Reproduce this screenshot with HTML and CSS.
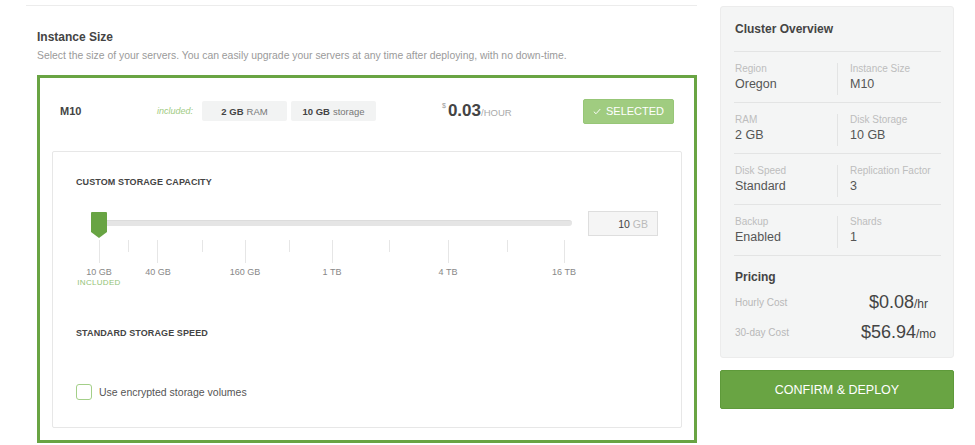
FILE: index.html
```html
<!DOCTYPE html>
<html>
<head>
<meta charset="utf-8">
<link rel="stylesheet" href="styles.css">
</head>
<body>
<div class="page">
  <div class="main">
    <div class="topline"></div>
    <div class="section">
      <h2 class="sec-title">Instance Size</h2>
      <p class="sec-sub">Select the size of your servers. You can easily upgrade your servers at any time after deploying, with no down-time.</p>
      <div class="tier">
        <div class="tier-head">
          <div class="tier-name">M10</div>
          <div class="included">included:</div>
          <div class="chip"><b>2 GB</b> RAM</div>
          <div class="chip"><b>10 GB</b> storage</div>
          <div class="price"><span class="cur">$</span><span class="amt">0.03</span><span class="per">/HOUR</span></div>
          <div class="selected"><svg class="check" viewBox="0 0 10 8" width="8" height="7"><path d="M1 4.2 L3.8 6.8 L9 1" fill="none" stroke="#fff" stroke-width="1.2"/></svg>SELECTED</div>
        </div>
        <div class="panel">
          <div class="label-caps">Custom Storage Capacity</div>
          <div class="slider-row">
            <div class="slider">
              <div class="track"></div>
              <svg class="thumb" viewBox="0 0 16 26" width="16" height="26"><path d="M1 0 H15 Q16 0 16 1 V20 L8 26 L0 20 V1 Q0 0 1 0 Z" fill="#68a443"/></svg>
              <div class="scale">
                <span class="tick tall" style="left:8px"></span>
                <span class="tick" style="left:37px"></span>
                <span class="tick tall" style="left:66px"></span>
                <span class="tick" style="left:111px"></span>
                <span class="tick tall" style="left:154px"></span>
                <span class="tick" style="left:198px"></span>
                <span class="tick tall" style="left:241px"></span>
                <span class="tick" style="left:298px"></span>
                <span class="tick tall" style="left:357px"></span>
                <span class="tick" style="left:416px"></span>
                <span class="tick tall" style="left:473px"></span>
                <span class="tlabel" style="left:8px">10 GB<em>INCLUDED</em></span>
                <span class="tlabel" style="left:67px">40 GB</span>
                <span class="tlabel" style="left:154px">160 GB</span>
                <span class="tlabel" style="left:241px">1 TB</span>
                <span class="tlabel" style="left:357px">4 TB</span>
                <span class="tlabel" style="left:473px">16 TB</span>
              </div>
            </div>
            <div class="gb-input"><span class="num">10</span> GB</div>
          </div>
          <div class="label-caps speed">Standard Storage Speed</div>
          <label class="check-row"><span class="box"></span>Use encrypted storage volumes</label>
        </div>
      </div>
    </div>
  </div>
  <div class="side">
    <div class="overview">
      <h3 class="ov-title">Cluster Overview</h3>
      <div class="ov-grid">
        <div class="ov-row">
          <div class="ov-cell"><div class="ov-label">Region</div><div class="ov-val">Oregon</div></div>
          <div class="ov-cell"><div class="ov-label">Instance Size</div><div class="ov-val">M10</div></div>
        </div>
        <div class="ov-row">
          <div class="ov-cell"><div class="ov-label">RAM</div><div class="ov-val">2 GB</div></div>
          <div class="ov-cell"><div class="ov-label">Disk Storage</div><div class="ov-val">10 GB</div></div>
        </div>
        <div class="ov-row">
          <div class="ov-cell"><div class="ov-label">Disk Speed</div><div class="ov-val">Standard</div></div>
          <div class="ov-cell"><div class="ov-label">Replication Factor</div><div class="ov-val">3</div></div>
        </div>
        <div class="ov-row">
          <div class="ov-cell"><div class="ov-label">Backup</div><div class="ov-val">Enabled</div></div>
          <div class="ov-cell"><div class="ov-label">Shards</div><div class="ov-val">1</div></div>
        </div>
      </div>
      <h3 class="pr-title">Pricing</h3>
      <div class="pr-list">
        <div class="pr-row"><div class="pr-label">Hourly Cost</div><div class="pr-val">$0.08<span>/hr</span></div></div>
        <div class="pr-row"><div class="pr-label">30-day Cost</div><div class="pr-val">$56.94<span>/mo</span></div></div>
      </div>
    </div>
    <button class="deploy">CONFIRM &amp; DEPLOY</button>
  </div>
</div>
</body>
</html>
```

FILE: styles.css
```css
* { box-sizing: border-box; }
html, body { margin: 0; padding: 0; background: #fff; }
body { font-family: "Liberation Sans", Arial, sans-serif; color: #444; }
.page { display: flex; align-items: flex-start; }
.main { margin-left: 26px; width: 671px; }
.topline { height: 1px; background: #ececec; margin-top: 5px; }
.section { padding-left: 11px; }
.sec-title { margin: 24px 0 0; font-size: 12px; line-height: 14px; font-weight: bold; color: #444; }
.sec-sub { margin: 5px 0 0; font-size: 10.4px; line-height: 14px; color: #9a9a9a; }
.tier { margin-top: 12px; border: 3px solid #69a443; padding: 0 12px 12px; }
.tier-head { display: flex; align-items: center; height: 66px; margin-bottom: 7px; padding-left: 8px; padding-right: 8px; }
.tier-name { width: 97px; font-size: 11px; font-weight: bold; color: #444; }
.included { font-size: 9px; font-style: italic; color: #9fcb83; width: 45px; }
.chip { width: 85px; height: 20px; margin-right: 4px; background: #f2f3f3; border-radius: 2px; display: flex; align-items: center; justify-content: center; font-size: 9.5px; color: #777; }
.chip b { color: #444; margin-right: 3px; }
.price { margin-left: 62px; display: flex; align-items: baseline; color: #444; }
.price .cur { font-size: 7px; color: #999; align-self: flex-start; margin-top: 1px; margin-right: 2px; }
.price .amt { font-size: 17px; font-weight: bold; }
.price .per { font-size: 9.5px; color: #aaa; }
.selected { margin-left: auto; width: 91px; height: 25px; background: #a0cc80; border: 1px solid #97c677; border-radius: 2px; color: #fff; font-size: 11px; display: flex; align-items: center; justify-content: center; }
.check { margin-right: 5px; }
.panel { border: 1px solid #e7e7e7; border-radius: 2px; padding: 25px 23px 0; height: 277px; }
.label-caps { font-size: 9px; line-height: 11px; font-weight: bold; text-transform: uppercase; color: #444; letter-spacing: 0.1px; }
.slider-row { display: flex; margin-top: 24px; height: 93px; }
.slider { position: relative; margin-left: 15px; width: 481px; height: 93px; }
.track { position: absolute; left: 0; top: 8px; width: 481px; height: 6px; background: #e5e5e5; border-radius: 0 4px 4px 0; border-top: 1px solid #dcdcdc; }
.thumb { position: absolute; left: 0; top: 0; }
.scale { position: absolute; left: 0; top: 28px; width: 481px; height: 60px; }
.tick { position: absolute; top: 0; width: 1px; height: 12px; background: #e6e6e6; }
.tick.tall { height: 23px; }
.tlabel { position: absolute; top: 27px; transform: translateX(-50%); font-size: 9px; line-height: 10px; color: #888; white-space: nowrap; text-align: center; display: flex; flex-direction: column; align-items: center; }
.tlabel em { font-style: normal; font-size: 8px; color: #93c377; margin-top: 1px; letter-spacing: 0.3px; }
.gb-input { margin-left: 16px; margin-top: -1px; width: 70px; height: 25px; background: #f5f5f5; border: 1px solid #dedede; font-size: 10.5px; color: #bbb; display: flex; align-items: center; justify-content: flex-end; padding-right: 9px; }
.gb-input .num { color: #444; margin-right: 3px; }
.speed { margin-top: 23px; }
.check-row { display: flex; align-items: center; margin-top: 45px; font-size: 10.5px; color: #555; }
.box { width: 16px; height: 16px; border: 1px solid #a3cf88; border-radius: 3px; margin-right: 7px; background: #fff; }
.side { margin-left: 23px; margin-top: 6px; width: 234px; }
.overview { background: #f4f5f5; border: 1px solid #ececec; border-radius: 3px; padding: 15px 12px 14px 13px; height: 352px; }
.ov-title, .pr-title { margin: 0; font-size: 12px; line-height: 14px; font-weight: bold; color: #444; padding-left: 1px; }
.ov-grid { margin-top: 15px; border-top: 1px solid #e3e4e4; }
.ov-row { display: flex; height: 51px; border-bottom: 1px solid #e3e4e4; padding-top: 11px; }
.ov-cell { padding-left: 1px; height: 32px; }
.ov-cell:first-child { width: 104px; border-right: 1px solid #e3e4e4; }
.ov-cell:last-child { padding-left: 12px; }
.ov-label { font-size: 10px; line-height: 12px; color: #bdbdbd; }
.ov-val { font-size: 12.5px; line-height: 16px; color: #555; margin-top: 1px; }
.pr-title { margin-top: 14px; }
.pr-list { margin-top: 3px; }
.pr-row { display: flex; align-items: center; height: 30px; }
.pr-label { width: 122px; padding-left: 1px; font-size: 10px; color: #b8b8b8; }
.pr-val { flex: 1; text-align: center; font-size: 18px; color: #444; }
.pr-val span { font-size: 12px; }
.deploy { display: block; margin-top: 12px; width: 234px; height: 39px; background: #69a443; border: 1px solid #5e9a3a; border-radius: 2px; color: #fff; font-family: "Liberation Sans", Arial, sans-serif; font-size: 12.5px; cursor: pointer; }
```
